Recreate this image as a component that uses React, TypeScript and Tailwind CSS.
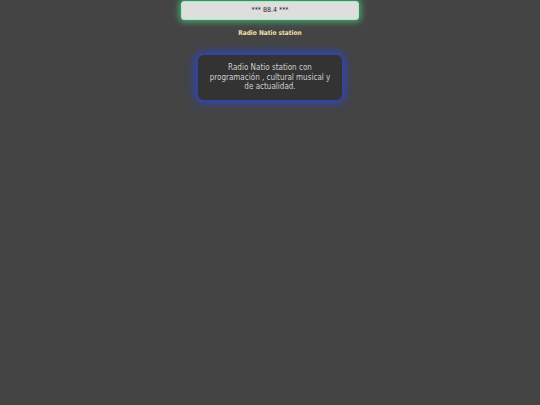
export default function App() {
  return (
    <div className="min-h-[405px] w-full bg-[#444444] flex flex-col items-center pt-[1px] font-['DejaVu_Sans_Condensed','DejaVu_Sans',sans-serif] font-stretch-condensed">
      {/* Frequency display */}
      <div className="w-[178px] h-[19px] bg-[#dedede] rounded-[3px] border border-[#9ef0c0] shadow-[0_0_6px_2px_rgba(80,220,140,0.65)] flex items-center justify-center text-[7px] text-[#222]">
        *** 88.4 ***
      </div>

      <div className="mt-[9px] text-[6.5px] font-bold text-[#efe0a8]">Radio Natio station</div>

      {/* Description card */}
      <div className="mt-[16px] w-[144px] h-[45px] bg-[#333333] rounded-[6px] shadow-[0_0_8px_3px_rgba(40,70,230,0.8)] flex items-center justify-center px-2 text-center text-[8px] leading-[9.5px] text-[#d0d0d0]">
        Radio Natio station con programación , cultural musical y de actualidad.
      </div>
    </div>
  );
}
